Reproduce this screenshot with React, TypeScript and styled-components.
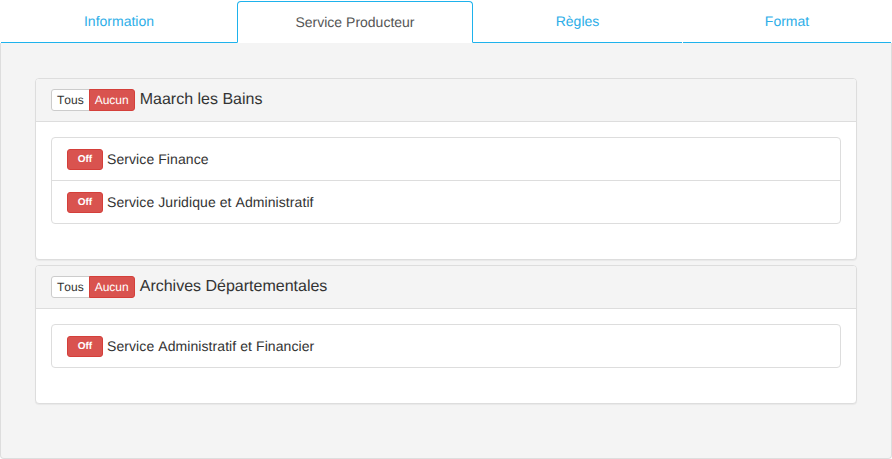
import React from "react";
import styled, { createGlobalStyle } from "styled-components";

const GlobalStyle = createGlobalStyle`
  html, body { margin: 0; padding: 0; background: #ffffff; }
  body {
    font-family: "Liberation Sans", Arial, Helvetica, sans-serif;
    color: #333;
    font-kerning: none;
    text-rendering: geometricPrecision;
  }
  * { box-sizing: border-box; }
`;

const Page = styled.div`
  width: 892px;
  height: 459px;
  display: flex;
  flex-direction: column;
`;

const TabBar = styled.div`
  display: grid;
  grid-template-columns: 236px 234px 209px 1fr;
  column-gap: 1px;
  padding: 0 1px;
  height: 43px;
  align-items: end;
`;

const Tab = styled.div<{ $active?: boolean }>`
  height: ${(p) => (p.$active ? "42px" : "43px")};
  display: flex;
  align-items: center;
  justify-content: center;
  font-size: 14px;
  padding-bottom: ${(p) => (p.$active ? "0" : "1px")};
  color: ${(p) => (p.$active ? "#555555" : "#2daee8")};
  background: #ffffff;
  border-bottom: 1px solid ${(p) => (p.$active ? "transparent" : "#1eb2ec")};
  ${(p) =>
    p.$active
      ? `border-top: 1px solid #1eb2ec;
         border-left: 1px solid #1eb2ec;
         border-right: 1px solid #1eb2ec;
         border-radius: 4px 4px 0 0;
         margin: 0 -1px;`
      : ""}
`;

const Content = styled.div`
  height: 416px;
  background: #f4f4f4;
  border: 1px solid #dddddd;
  border-top: none;
  border-radius: 0 0 4px 4px;
  padding: 35px 34px 34px;
  display: flex;
  flex-direction: column;
  gap: 5px;
`;

const Card = styled.div`
  background: #ffffff;
  border: 1px solid #dddddd;
  border-radius: 4px;
  box-shadow: 0 1px 1px rgba(0, 0, 0, 0.05);
`;

const CardHeader = styled.div`
  height: 43px;
  display: flex;
  align-items: center;
  padding: 0 15px;
  background: #f4f4f4;
  border-bottom: 1px solid #dddddd;
  border-radius: 3px 3px 0 0;
`;

const ButtonGroup = styled.div`
  display: flex;
  margin-right: 5px;
`;

const GroupButton = styled.span<{ $danger?: boolean }>`
  height: 22px;
  display: inline-flex;
  align-items: center;
  padding: 0 5px;
  font-size: 12px;
  border: 1px solid ${(p) => (p.$danger ? "#d43f3a" : "#cccccc")};
  background: ${(p) => (p.$danger ? "#d9534f" : "#ffffff")};
  color: ${(p) => (p.$danger ? "#ffffff" : "#333333")};
  border-radius: ${(p) => (p.$danger ? "0 3px 3px 0" : "3px 0 0 3px")};
  margin-left: ${(p) => (p.$danger ? "-1px" : "0")};
`;

const CardTitle = styled.span`
  font-size: 16px;
  color: #333333;
`;

const CardBody = styled.div`
  padding: 15px 15px 35px;
`;

const List = styled.div`
  border: 1px solid #dddddd;
  border-radius: 4px;
`;

const Item = styled.div`
  height: 42px;
  display: flex;
  align-items: center;
  padding: 0 15px;
  & + & {
    border-top: 1px solid #dddddd;
    height: 43px;
  }
`;

const OffButton = styled.span`
  width: 36px;
  height: 21px;
  display: inline-flex;
  align-items: center;
  justify-content: center;
  background: #d9534f;
  border: 1px solid #d43f3a;
  border-radius: 3px;
  color: #ffffff;
  font-size: 10px;
  font-weight: bold;
  margin-right: 4px;
`;

const ItemLabel = styled.span`
  font-size: 14px;
  letter-spacing: 0.08px;
  color: #333333;
  margin-top: -1px;
`;

const groups = [
  {
    title: "Maarch les Bains",
    services: ["Service Finance", "Service Juridique et Administratif"],
  },
  {
    title: "Archives Départementales",
    services: ["Service Administratif et Financier"],
  },
];

const tabs = ["Information", "Service Producteur", "Règles", "Format"];

export default function App() {
  return (
    <>
      <GlobalStyle />
      <Page>
        <TabBar>
          {tabs.map((t) => (
            <Tab key={t} $active={t === "Service Producteur"}>
              {t}
            </Tab>
          ))}
        </TabBar>
        <Content>
          {groups.map((g) => (
            <Card key={g.title}>
              <CardHeader>
                <ButtonGroup>
                  <GroupButton>Tous</GroupButton>
                  <GroupButton $danger>Aucun</GroupButton>
                </ButtonGroup>
                <CardTitle>{g.title}</CardTitle>
              </CardHeader>
              <CardBody>
                <List>
                  {g.services.map((s) => (
                    <Item key={s}>
                      <OffButton>Off</OffButton>
                      <ItemLabel>{s}</ItemLabel>
                    </Item>
                  ))}
                </List>
              </CardBody>
            </Card>
          ))}
        </Content>
      </Page>
    </>
  );
}
